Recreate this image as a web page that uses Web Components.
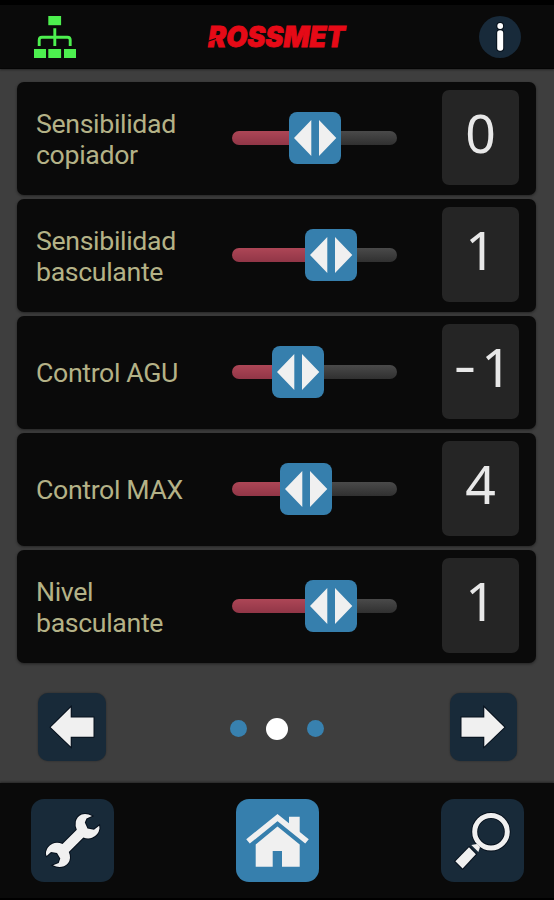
<!DOCTYPE html>
<html lang="es">
<head>
<meta charset="utf-8">
<title>Rossmet</title>
<style>
    body {
        margin: 0;
        background: #3e3e3e;
        font-family: Roboto, sans-serif;
    }
</style>
</head>
<body>
<rossmet-app></rossmet-app>

<script>
function makeTemplate(html) {
    const template = document.createElement('template');
    template.innerHTML = html;
    return template;
}

class BaseElement extends HTMLElement {
    constructor() {
        super();
        this.attachShadow({mode: 'open'});
        this.shadowRoot.appendChild(this.constructor.template.content.cloneNode(true));
    }
}

class AppHeader extends BaseElement {
    static template = makeTemplate(`
        <style>
            :host {
                display: flex;
                justify-content: space-between;
                align-items: center;
                box-sizing: border-box;
                height: 69px;
                padding: 0 33px 0 34px;
                background: #0a0a0a;
                border-top: 5px solid #000;
                border-bottom: 1px solid #050505;
                box-shadow: 0 1px 2px rgba(0, 0, 0, .4);
            }
            svg { display: block; }
            .logo { overflow: visible; }
            .logo text {
                font: italic 900 28px Inter, sans-serif;
                fill: #e60a17;
                stroke: #e60a17;
                stroke-width: .8;
            }
        </style>
        <svg width="42" height="42" viewBox="0 0 42 42">
            <g fill="#4df04f">
                <rect x="14.3" y="0" width="12.8" height="9.2"/>
                <rect x="0" y="33" width="12" height="9.4"/>
                <rect x="14.3" y="33" width="12.8" height="9.4"/>
                <rect x="30" y="33" width="12" height="9.4"/>
            </g>
            <path d="M20.8 12.3V30M5.2 30v-6q0-2.8 2.8-2.8h25.4q2.8 0 2.8 2.8V30" fill="none" stroke="#4df04f" stroke-width="2.9"/>
        </svg>
        <svg class="logo" width="140" height="24" viewBox="0 0 140 24">
            <text x="0" y="22.4" textLength="137" lengthAdjust="spacingAndGlyphs">ROSSMET</text>
            <path d="M0 16.2 8 13.5" stroke="#0a0a0a" stroke-width="1.2"/>
        </svg>
        <svg width="42" height="42" viewBox="0 0 42 42">
            <circle cx="21" cy="21" r="21" fill="#182a3a"/>
            <circle cx="21.2" cy="10" r="2.9" fill="#fff" stroke="#07111b" stroke-width="2" paint-order="stroke"/>
            <rect x="18.2" y="14.3" width="6" height="20.5" rx="2.8" fill="#fff" stroke="#07111b" stroke-width="2" paint-order="stroke"/>
        </svg>
    `);
}

class RangeSlider extends BaseElement {
    static template = makeTemplate(`
        <style>
            :host {
                display: flex;
                align-items: center;
                width: 165px;
            }
            .fill, .rest {
                height: 14px;
                box-sizing: border-box;
            }
            .fill {
                flex: none;
                border-radius: 7px 0 0 7px;
                background: linear-gradient(#ad4656, #913647);
            }
            .rest {
                flex: 1;
                border-radius: 0 7px 7px 0;
                background: linear-gradient(#4a4a4a, #303030);
            }
            .thumb {
                flex: none;
                width: 52px;
                height: 52px;
                border-radius: 8px;
                background: #367fad;
            }
            svg { display: block; }
        </style>
        <div class="fill"></div>
        <div class="thumb">
            <svg width="52" height="52" viewBox="0 0 52 52">
                <path d="M22.3 8v36L5 26zM30 8v36l17.3-18z" fill="#f0f0f0"/>
            </svg>
        </div>
        <div class="rest"></div>
    `);

    connectedCallback() {
        this.shadowRoot.querySelector('.fill').style.width = this.getAttribute('fill') + 'px';
    }
}

class SettingRow extends BaseElement {
    static template = makeTemplate(`
        <style>
            :host {
                display: grid;
                grid-template-columns: 195px 165px 1fr 77px;
                align-items: center;
                box-sizing: border-box;
                height: 112.6px;
                padding: 0 17px 1.4px 20px;
                border-radius: 7px;
                background: #0a0a0a;
                box-shadow: 0 1px 3px rgba(0, 0, 0, .45);
            }
            .label {
                width: 150px;
                margin-left: -1px;
                padding-top: 3.5px;
                font-size: 26.7px;
                line-height: 30.5px;
                letter-spacing: -.35px;
                color: #b4b287;
            }
            .value {
                grid-column: 4;
                display: flex;
                justify-content: center;
                box-sizing: border-box;
                height: 95px;
                border-radius: 7px;
                background: #252525;
                font-family: "Noto Sans", sans-serif;
                font-size: 53.5px;
                line-height: 86.5px;
                color: #e8e8e8;
            }
            .value span {
                width: 32px;
                text-align: center;
            }
            .value .sign {
                transform: translateY(-3px) scaleX(1.3);
            }
        </style>
        <div class="label"><slot></slot></div>
        <range-slider></range-slider>
        <div class="value"></div>
    `);

    connectedCallback() {
        this.shadowRoot.querySelector('range-slider').setAttribute('fill', this.getAttribute('fill'));
        this.shadowRoot.querySelector('range-slider').connectedCallback();
        this.shadowRoot.querySelector('.value').innerHTML = [...this.getAttribute('value')]
            .map(c => `<span class="${c === '-' ? 'sign' : ''}">${c}</span>`).join('');
    }
}

class PageNav extends BaseElement {
    static template = makeTemplate(`
        <style>
            :host {
                display: flex;
                justify-content: space-between;
                align-items: center;
                padding: 0 37px 0 38px;
            }
            .btn {
                width: 67.5px;
                height: 68px;
                border-radius: 10px;
                background: #182a39;
                box-shadow: 0 0 2px rgba(0, 0, 0, .4);
            }
            .next svg { transform: scaleX(-1); }
            svg { display: block; overflow: visible; }
            .dots {
                display: flex;
                align-items: center;
                gap: 19.2px;
                padding: 3px 1px 0 0;
            }
            i {
                width: 17.2px;
                height: 17.2px;
                border-radius: 50%;
                background: #3881af;
            }
            i.on {
                width: 22px;
                height: 22px;
                background: #fff;
            }
        </style>
        <div class="btn">
            <svg width="67" height="68" viewBox="0 0 67 68">
                <path d="M12.7 34.3 32.7 14.5v10h22.8v19.2H32.7v9.8z" fill="#f0f0f0" stroke="#06101c" stroke-width="2" paint-order="stroke"/>
            </svg>
        </div>
        <div class="dots"><i></i><i class="on"></i><i></i></div>
        <div class="btn next">
            <svg width="67" height="68" viewBox="0 0 67 68">
                <path d="M12.7 34.3 32.7 14.5v10h22.8v19.2H32.7v9.8z" fill="#f0f0f0" stroke="#06101c" stroke-width="2" paint-order="stroke"/>
            </svg>
        </div>
    `);
}

class TabBar extends BaseElement {
    static template = makeTemplate(`
        <style>
            :host {
                display: flex;
                justify-content: space-between;
                box-sizing: border-box;
                height: 117px;
                padding: 16px 30px 0 31px;
                background: #0a0a0a;
                border-bottom: 2px solid #000;
                box-shadow: 0 -1px 2px rgba(0, 0, 0, .4);
            }
            .tab {
                width: 83px;
                height: 83px;
                border-radius: 13px;
                background: #182a39;
            }
            .tab.active { background: #367fad; }
            svg { display: block; }
        </style>
        <div class="tab">
            <svg width="83" height="83" viewBox="0 0 83 83">
                <path d="M61 17Q56 14.2 50.7 15.5 46 17.5 44.8 22.5 44 27 45.8 30.8L31.5 45Q26 42.8 21.5 44.8 16 47.5 15 53 14.6 55.5 15.6 57L20 53 26 54 29.3 59.5 27.7 64 22 66.3Q27 69 33 67.3 38.5 64.5 39 59 39.2 56 37.8 53L52.3 38.5Q57 40.3 61 38.8 67.5 36 68.5 29.5L68.2 26.7 63 30.8 56.5 29.5 53.8 23.5 55.5 19.5Z" fill="#f0f0f0" stroke="#06101c" stroke-width="2" paint-order="stroke"/>
            </svg>
        </div>
        <div class="tab active">
            <svg width="83" height="83" viewBox="0 0 83 83">
                <path d="M19.7 45.5 41.5 27.5 63.7 45.5V67.7H46V52H36.7V67.7H19.7z" fill="#f0f0f0"/>
                <path d="M12.5 44.2 41.5 20.3 70.5 44.2" fill="none" stroke="#367fad" stroke-width="8.5"/>
                <path d="M53 17.7H63.7V36L53 27z" fill="#f0f0f0"/>
                <path d="M12 42.4 41.5 18.6 71 42.4" fill="none" stroke="#f0f0f0" stroke-width="5.6"/>
            </svg>
        </div>
        <div class="tab">
            <svg width="83" height="83" viewBox="0 0 83 83">
                <circle cx="50" cy="32.7" r="16.3" fill="none" stroke="#06101c" stroke-width="6.8"/>
                <path d="M28 48.3 34.9 55.2 21.6 69.5 14.4 62.3z" fill="#f0f0f0" stroke="#06101c" stroke-width="2" paint-order="stroke"/>
                <path d="M30.3 46 36 45 39 48 37.4 53z" fill="#f0f0f0"/>
                <circle cx="50" cy="32.7" r="16.3" fill="none" stroke="#f0f0f0" stroke-width="5"/>
            </svg>
        </div>
    `);
}

class RossmetApp extends BaseElement {
    static template = makeTemplate(`
        <style>
            :host {
                display: flex;
                flex-direction: column;
                height: 900px;
                overflow: hidden;
                background: #3e3e3e;
            }
            main {
                display: flex;
                flex-direction: column;
                gap: 4.4px;
                padding: 13.3px 18px 0 17px;
            }
            page-nav { margin-top: 30.3px; }
            tab-bar { margin-top: auto; }
        </style>
        <app-header></app-header>
        <main>
            <setting-row value="0" fill="57">Sensibilidad copiador</setting-row>
            <setting-row value="1" fill="73">Sensibilidad basculante</setting-row>
            <setting-row value="-1" fill="40">Control AGU</setting-row>
            <setting-row value="4" fill="47.5">Control MAX</setting-row>
            <setting-row value="1" fill="73">Nivel basculante</setting-row>
        </main>
        <page-nav></page-nav>
        <tab-bar></tab-bar>
    `);
}

customElements.define('app-header', AppHeader);
customElements.define('range-slider', RangeSlider);
customElements.define('setting-row', SettingRow);
customElements.define('page-nav', PageNav);
customElements.define('tab-bar', TabBar);
customElements.define('rossmet-app', RossmetApp);
</script>
</body>
</html>
